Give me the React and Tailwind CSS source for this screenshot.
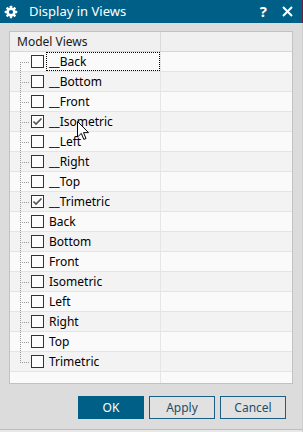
const views = [
  { name: '__Back', checked: false },
  { name: '__Bottom', checked: false },
  { name: '__Front', checked: false },
  { name: '__Isometric', checked: true },
  { name: '__Left', checked: false },
  { name: '__Right', checked: false },
  { name: '__Top', checked: false },
  { name: '__Trimetric', checked: true },
  { name: 'Back', checked: false },
  { name: 'Bottom', checked: false },
  { name: 'Front', checked: false },
  { name: 'Isometric', checked: false },
  { name: 'Left', checked: false },
  { name: 'Right', checked: false },
  { name: 'Top', checked: false },
  { name: 'Trimetric', checked: false },
];

function Gear() {
  return (
    <svg width="14" height="14" viewBox="0 0 14 14">
      {[0, 45, 90, 135, 180, 225, 270, 315].map((a) => (
        <rect key={a} x="5.8" y="0.8" width="2.4" height="3" rx="0.4" fill="#fff" transform={`rotate(${a} 7 7)`} />
      ))}
      <circle cx="7" cy="7" r="4.6" fill="#fff" />
      <circle cx="7" cy="7" r="2.1" fill="#005f87" />
    </svg>
  );
}

function TreeLines({ first, last }) {
  return (
    <svg width="21" height="20" className="shrink-0 self-start">
      <line
        x1="10.5"
        y1={first ? 10 : 0}
        x2="10.5"
        y2={last ? 11 : 20}
        stroke="#9a9a9a"
        strokeDasharray="1 1"
      />
      <line x1="12" y1="10.5" x2="20" y2="10.5" stroke="#9a9a9a" strokeDasharray="1 1" />
    </svg>
  );
}

function Checkbox({ checked }) {
  return (
    <div className="flex h-[13px] w-[13px] shrink-0 items-center justify-center border border-[#333333] bg-[#fdfdfd]">
      {checked && (
        <svg width="11" height="11" viewBox="0 0 11 11">
          <path d="M1.5 5.5 L4 8 L9.5 2.5" fill="none" stroke="#555555" strokeWidth="1.6" />
        </svg>
      )}
    </div>
  );
}

export default function App() {
  return (
    <div className="relative flex h-[432px] w-[303px] overflow-hidden bg-[#cfcfcf] font-['Noto_Sans',sans-serif] text-black">
      <div className="flex w-[302px] flex-col bg-[#dcdcdc]">
        {/* Title bar */}
        <div className="flex h-[23px] shrink-0 items-center bg-[#005f87] text-white">
          <div className="ml-[4px] flex">
            <Gear />
          </div>
          <span className="ml-[11px] text-[13px] leading-none">Display in Views</span>
          <span className="ml-auto text-[15px] font-bold leading-none">?</span>
          <svg width="11" height="11" viewBox="0 0 11 11" className="ml-[15px] mr-[9px]">
            <path d="M1 1 L10 10 M10 1 L1 10" stroke="#fff" strokeWidth="2" />
          </svg>
        </div>

        {/* Tree panel */}
        <div className="ml-[9px] mt-[8px] flex h-[353px] w-[284px] shrink-0 flex-col border border-[#c2c2c2] bg-[#fafafa]">
          <div className="flex h-[20px] shrink-0 border-b border-[#d6d6d6] bg-[#f0f0f0]">
            <div className="flex w-[151px] items-center border-r border-[#d9d9d9] pl-[7px] text-[12px] text-[#1a1a1a]">
              Model Views
            </div>
            <div className="flex-1" />
          </div>

          {views.map((v, i) => (
            <div
              key={v.name}
              className={`flex h-[20px] shrink-0 border-b border-[#e4e4e4] ${i % 2 === 0 ? 'bg-[#fafafa]' : 'bg-[#f3f3f3]'}`}
            >
              <div className="flex w-[151px] items-center border-r border-[#e6e6e6]">
                <TreeLines first={i === 0} last={i === views.length - 1} />
                <Checkbox checked={v.checked} />
                <div
                  className={`ml-[2px] flex h-full flex-1 items-center border pl-[2px] text-[12px] ${i === 0 ? 'border-dotted border-black' : 'border-transparent'}`}
                >
                  {v.name}
                </div>
              </div>
              <div className="flex-1" />
            </div>
          ))}

          <div className="flex flex-1">
            <div className="w-[151px] border-r border-[#e6e6e6]" />
            <div className="flex-1" />
          </div>
        </div>

        {/* Buttons */}
        <div className="mt-[12px] flex justify-end gap-[5px] pr-[16px] text-[12px]">
          <button className="flex h-[23px] w-[66px] items-center justify-center bg-[#005f87] text-white">OK</button>
          <button className="flex h-[23px] w-[66px] items-center justify-center border border-[#1b5f85] bg-[#e1e1e1] text-[#1d4f6b]">
            Apply
          </button>
          <button className="flex h-[23px] w-[66px] items-center justify-center border border-[#1b5f85] bg-[#e1e1e1] text-[#1d4f6b]">
            Cancel
          </button>
        </div>

        <div className="mt-auto h-px bg-[#bdbdbd]" />
        <div className="h-[2px] bg-[#e8e8e8]" />
      </div>
      <div className="flex w-px flex-col">
        <div className="h-[23px] bg-[#6d2142]" />
        <div className="flex-1 bg-[#cfcfcf]" />
      </div>

      {/* Mouse pointer */}
      <svg width="13" height="20" viewBox="0 0 13 20" className="absolute left-[77px] top-[121px]">
        <path d="M0.5 0.5 L0.5 16 L4.3 12.4 L6.8 18.4 L9 17.5 L6.5 11.6 L11.5 11.6 Z" fill="#fff" stroke="#000" strokeWidth="1" strokeLinejoin="miter" />
      </svg>
    </div>
  );
}
